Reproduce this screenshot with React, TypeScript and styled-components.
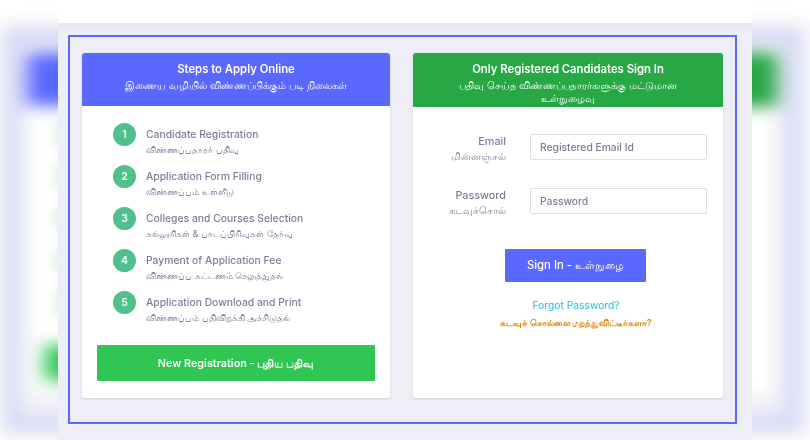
import React from "react";
import styled, { createGlobalStyle } from "styled-components";

const GlobalStyle = createGlobalStyle`
  html, body {
    margin: 0;
    padding: 0;
    background: #fff;
  }
  body {
    font-family: Inter, "Noto Sans", "Liberation Sans", sans-serif;
  }
`;

const Page = styled.div`
  position: relative;
  width: 810px;
  height: 440px;
  overflow: hidden;
  background: #fff;
`;

const Backdrop = styled.div`
  position: absolute;
  inset: 0;
  transform: scaleX(1.17);
  filter: blur(8px);
`;

const Foreground = styled.div`
  position: relative;
  height: 100%;
  filter: blur(0.45px);
`;

const Sheet = styled.div`
  width: 694px;
  height: 440px;
  margin: 0 auto;
  padding-top: 23px;
  box-sizing: border-box;
  background: #fff;
`;

const SheetBody = styled.div`
  height: 417px;
  padding: 12px 15px 0 10px;
  box-sizing: border-box;
  background: linear-gradient(#e8e8f1, #eeeff6 12px);
`;

const Frame = styled.div`
  height: 389px;
  padding: 16px 0 0 12px;
  box-sizing: border-box;
  border: 2px solid #5b69ff;
  display: grid;
  grid-template-columns: 308px 310px;
  column-gap: 23px;
  align-items: start;
`;

const Card = styled.section`
  height: 345px;
  background: #fff;
  border-radius: 3px;
  box-shadow: 0 1px 3px rgba(120, 125, 170, 0.25);
  overflow: hidden;
`;

const CardHeader = styled.header<{ $tone: string; $height: number }>`
  height: ${(p) => p.$height}px;
  padding-top: 9px;
  box-sizing: border-box;
  background: ${(p) => p.$tone};
  color: #fff;
  text-align: center;
`;

const CardTitle = styled.h2`
  margin: 0;
  font-size: 11.3px;
  line-height: 15px;
  font-weight: 600;
`;

const CardSubtitle = styled.p`
  width: 240px;
  margin: 2px auto 0;
  font-size: 10.2px;
  line-height: 13px;
`;

const Steps = styled.ol`
  list-style: none;
  margin: 0;
  padding: 17px 0 0 31px;
  display: grid;
  grid-auto-rows: 42px;
`;

const Step = styled.li`
  display: flex;
  gap: 10px;
`;

const StepNumber = styled.span`
  width: 23px;
  height: 23px;
  flex: none;
  border-radius: 50%;
  background: #52c08a;
  color: #f2fff8;
  font-size: 10.5px;
  font-weight: 600;
  line-height: 23px;
  text-align: center;
`;

const StepText = styled.div`
  padding-top: 4px;
`;

const StepTitle = styled.div`
  color: #7a7e9a;
  font-size: 10.35px;
  line-height: 15px;
  font-weight: 500;
`;

const StepTamil = styled.div`
  color: #7a7e9a;
  font-size: 9.1px;
  line-height: 16px;
`;

const BigButton = styled.button<{ $tone: string }>`
  display: block;
  border: 0;
  border-radius: 1px;
  background: ${(p) => p.$tone};
  color: #fff;
  font-family: inherit;
  text-align: center;
`;

const RegisterButton = styled(BigButton)`
  width: 278px;
  height: 36px;
  margin: 12px 0 0 15px;
  font-size: 10.8px;
  font-weight: 600;
`;

const SignInButton = styled(BigButton)`
  width: 141px;
  height: 33px;
  margin: 7px 0 0 92px;
  font-size: 11.3px;
  font-weight: 500;
`;

const SmallTamil = styled.span`
  font-size: 11px;
`;

const SignInForm = styled.form`
  padding: 27px 16px 0 0;
  display: grid;
  grid-auto-rows: 54px;
`;

const FormRow = styled.div`
  display: grid;
  grid-template-columns: 93px 177px;
  column-gap: 24px;
`;

const LabelBlock = styled.label`
  text-align: right;
  color: #7a7e9a;
`;

const LabelText = styled.div`
  font-size: 10.8px;
  line-height: 15px;
  font-weight: 500;
`;

const LabelTamil = styled.div`
  margin-top: 1px;
  font-size: 9.8px;
  line-height: 14px;
  color: #8589a3;
`;

const TextBox = styled.input`
  width: 177px;
  height: 26px;
  padding: 0 9px;
  box-sizing: border-box;
  border: 1px solid #dcdded;
  border-radius: 2px;
  background: #fff;
  font-family: inherit;
  font-size: 10.3px;
  font-weight: 500;
  &::placeholder {
    color: #7a7e9a;
    opacity: 1;
  }
`;

const ForgotLink = styled.a`
  display: block;
  margin-top: 16px;
  padding-left: 16px;
  color: #1fc0da;
  font-size: 10.3px;
  line-height: 15px;
  text-align: center;
`;

const ForgotTamil = styled.div`
  margin-top: 4px;
  padding-left: 16px;
  color: #d98c0e;
  font-size: 9.1px;
  line-height: 12px;
  font-weight: 600;
  text-align: center;
`;

const steps = [
  ["Candidate Registration", "விண்ணப்பதாரர் பதிவு"],
  ["Application Form Filling", "விண்ணப்பம் உள்ளீடு"],
  ["Colleges and Courses Selection", "கல்லூரிகள் & பாடப்பிரிவுகள் தேர்வு"],
  ["Payment of Application Fee", "விண்ணப்ப கட்டணம் செலுத்துதல்"],
  ["Application Download and Print", "விண்ணப்பம் பதிவிறக்கி அச்சிடுதல்"],
];

// same sheet without its text, stretched and blurred behind the real one
const BlurredSheet = () => (
  <Sheet>
    <SheetBody>
      <Frame>
        <Card>
          <CardHeader $tone="#5b68ff" $height={53} />
          <Steps>
            {steps.map(([title]) => (
              <Step key={title}>
                <StepNumber />
              </Step>
            ))}
          </Steps>
          <RegisterButton type="button" $tone="#2fc653" />
        </Card>
        <Card>
          <CardHeader $tone="#28a745" $height={54} />
        </Card>
      </Frame>
    </SheetBody>
  </Sheet>
);

export default function App() {
  return (
    <Page>
      <GlobalStyle />
      <Backdrop aria-hidden="true">
        <BlurredSheet />
      </Backdrop>
      <Foreground>
        <Sheet>
          <SheetBody>
            <Frame>
              <Card>
                <CardHeader $tone="#5b68ff" $height={53}>
                  <CardTitle>Steps to Apply Online</CardTitle>
                  <CardSubtitle>இணைய வழியில் விண்ணப்பிக்கும் படி நிலைகள்</CardSubtitle>
                </CardHeader>
                <Steps>
                  {steps.map(([title, tamil], i) => (
                    <Step key={title}>
                      <StepNumber>{i + 1}</StepNumber>
                      <StepText>
                        <StepTitle>{title}</StepTitle>
                        <StepTamil>{tamil}</StepTamil>
                      </StepText>
                    </Step>
                  ))}
                </Steps>
                <RegisterButton type="button" $tone="#2fc653">
                  New Registration - <SmallTamil>புதிய பதிவு</SmallTamil>
                </RegisterButton>
              </Card>
              <Card>
                <CardHeader $tone="#28a745" $height={54}>
                  <CardTitle>Only Registered Candidates Sign In</CardTitle>
                  <CardSubtitle>பதிவு செய்த விண்ணப்பதாரர்களுக்கு மட்டுமான உள்நுழைவு</CardSubtitle>
                </CardHeader>
                <SignInForm onSubmit={(e) => e.preventDefault()}>
                  <FormRow>
                    <LabelBlock>
                      <LabelText>Email</LabelText>
                      <LabelTamil>மின்னஞ்சல்</LabelTamil>
                    </LabelBlock>
                    <TextBox placeholder="Registered Email Id" readOnly />
                  </FormRow>
                  <FormRow>
                    <LabelBlock>
                      <LabelText>Password</LabelText>
                      <LabelTamil>கடவுச்சொல்</LabelTamil>
                    </LabelBlock>
                    <TextBox placeholder="Password" readOnly />
                  </FormRow>
                </SignInForm>
                <SignInButton type="button" $tone="#5b68ff">
                  Sign In - <SmallTamil>உள்நுழை</SmallTamil>
                </SignInButton>
                <ForgotLink>Forgot Password?</ForgotLink>
                <ForgotTamil>கடவுச் சொல்லை மறந்துவிட்டீர்களா?</ForgotTamil>
              </Card>
            </Frame>
          </SheetBody>
        </Sheet>
      </Foreground>
    </Page>
  );
}
